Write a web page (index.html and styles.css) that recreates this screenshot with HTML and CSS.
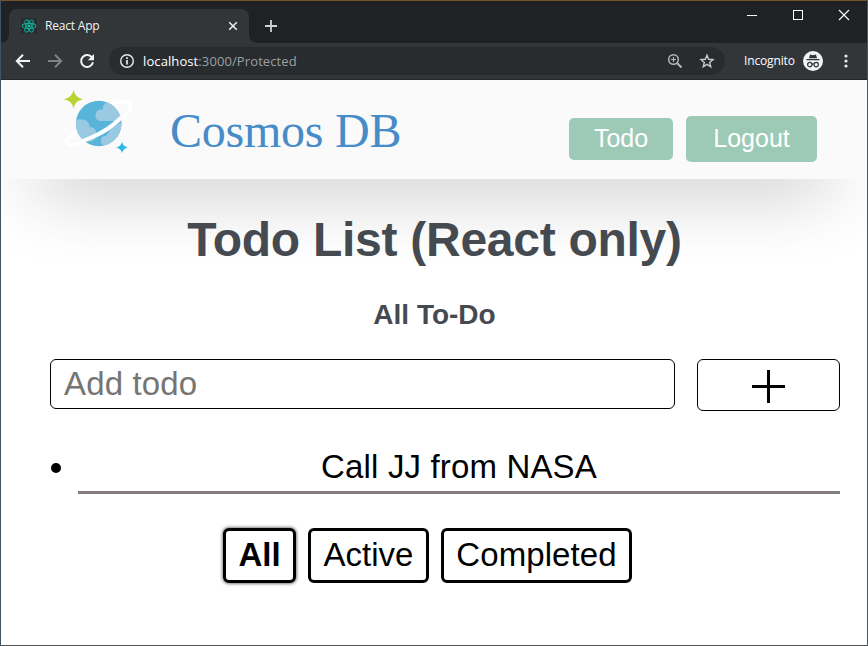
FILE: index.html
```html
<!DOCTYPE html>
<html lang="en">
<head>
<meta charset="utf-8">
<title>React App</title>
<link rel="stylesheet" href="styles.css">
</head>
<body>
<div class="window">
  <div class="tabstrip">
    <div class="tab">
      <svg class="favicon" width="16" height="16" viewBox="0 0 16 16"><rect width="16" height="16" fill="#282c34"/><g fill="none" stroke="#12a88c" stroke-width="1.1"><ellipse cx="8" cy="8" rx="6.8" ry="2.6"/><ellipse cx="8" cy="8" rx="6.8" ry="2.6" transform="rotate(60 8 8)"/><ellipse cx="8" cy="8" rx="6.8" ry="2.6" transform="rotate(120 8 8)"/></g><circle cx="8" cy="8" r="1.5" fill="#10c8a0"/></svg>
      <span class="tab-title">React App</span>
      <svg class="tab-close" width="10" height="10" viewBox="0 0 10 10"><path d="M1.2 1.2l7.6 7.6M8.8 1.2L1.2 8.8" stroke="#e8eaed" stroke-width="1.6"/></svg>
    </div>
    <svg class="new-tab" width="14" height="14" viewBox="0 0 14 14"><path d="M7 1v12M1 7h12" stroke="#d0d2d5" stroke-width="1.8"/></svg>
    <div class="controls">
      <svg width="12" height="12" viewBox="0 0 12 12"><path d="M1 6.5h10" stroke="#fff"/></svg>
      <svg width="12" height="12" viewBox="0 0 12 12"><rect x="1.5" y="1.5" width="9" height="9" fill="none" stroke="#fff"/></svg>
      <svg width="12" height="12" viewBox="0 0 12 12"><path d="M1 1l10 10M11 1L1 11" stroke="#fff" stroke-width="1.1"/></svg>
    </div>
  </div>
  <div class="toolbar">
    <svg width="16" height="16" viewBox="0 0 16 16"><path d="M15 8H2M8 1.8L1.8 8 8 14.2" fill="none" stroke="#f1f3f4" stroke-width="2"/></svg>
    <svg width="16" height="16" viewBox="0 0 16 16"><path d="M1 8h13M8 1.8L14.2 8 8 14.2" fill="none" stroke="#7f8285" stroke-width="2"/></svg>
    <svg width="16" height="16" viewBox="0 0 16 16"><path d="M13.2 4.8A6 6 0 1 0 14 9.3" fill="none" stroke="#f1f3f4" stroke-width="2"/><path d="M15 1v6.2H8.8z" fill="#f1f3f4"/></svg>
    <div class="omnibox">
      <svg width="16" height="16" viewBox="0 0 16 16"><circle cx="8" cy="8" r="6.3" fill="none" stroke="#e8eaed" stroke-width="1.4"/><path d="M8 7v4.6M8 4.2v1.7" stroke="#e8eaed" stroke-width="1.7"/></svg>
      <span class="url"><b>localhost</b>:3000/Protected</span>
      <svg class="magnify" width="16" height="16" viewBox="0 0 16 16"><circle cx="6.5" cy="6.5" r="4.8" fill="none" stroke="#b4b7ba" stroke-width="1.5"/><path d="M10 10l4.5 4.5" stroke="#b4b7ba" stroke-width="2"/><path d="M6.5 4v5M4 6.5h5" stroke="#b4b7ba" stroke-width="1.2"/></svg>
      <svg width="16" height="16" viewBox="0 0 16 16"><path d="M8 2.2l1.65 4.05 4.35.35-3.3 2.85 1 4.25L8 11.4l-3.7 2.3 1-4.25L2 6.6l4.35-.35z" fill="none" stroke="#c6c8ca" stroke-width="1.4"/></svg>
    </div>
    <span class="incognito">Incognito</span>
    <svg class="avatar" width="20" height="20" viewBox="0 0 20 20"><circle cx="10" cy="10" r="10" fill="#f1f3f4"/><path d="M7 3.5l3 .7 3-.7 1 3.8H6zM3.5 8h13v1.3h-13z" fill="#323639"/><g fill="none" stroke="#323639" stroke-width="1.2"><circle cx="6.8" cy="13.6" r="2.2"/><circle cx="13.2" cy="13.6" r="2.2"/><path d="M9 13.3q1-.7 2 0"/></g></svg>
    <svg class="more" width="4" height="14" viewBox="0 0 4 14" fill="#e8eaed"><circle cx="2" cy="2" r="1.6"/><circle cx="2" cy="7" r="1.6"/><circle cx="2" cy="12" r="1.6"/></svg>
  </div>
  <div class="page">
    <header class="header">
      <svg class="logo" width="100" height="80" viewBox="0 0 100 80">
        <defs><clipPath id="globe"><circle cx="48.7" cy="43.5" r="22.8"/></clipPath></defs>
        <path d="M61 23.500C72 20.500 79.500 21 80.500 25C81.500 30 76 36 68 42M28 50C20 56 15.500 61 17.500 63.500C20.500 66.500 31 64 40 60.500" fill="none" stroke="#fff" stroke-width="3.4"/>
        <circle cx="48.7" cy="43.5" r="22.8" fill="#59b4d9"/>
        <g clip-path="url(#globe)" fill="#9acae2">
          <path d="M72 41H50.500a5.800 5.800 0 0 1 0-11.500h2.500c-.5-5 3-9 10-8.500L74 32z"/>
          <path d="M24 39.500h9a7 7 0 0 1 6.500 7.500 5.800 5.800 0 0 1 0 14.500L24 66z"/>
          <path d="M51 60c0-3 2-4 5-4l4-6 14-10v25H54a4 4 0 0 1-3-5z"/>
        </g>
        <path d="M30 63.500C45 59.500 62 50.500 71.500 40L70.500 35.500C60 46 46 54.500 31 59.500z" fill="#fff"/>
        <path d="M23.500 9.800Q24.800 17.800 33 19.300Q24.800 20.800 23.500 28.500Q22.200 20.800 14 19.300Q22.200 17.800 23.500 9.800z" fill="#b8d432"/>
        <path d="M72 61.800Q73 66.500 77.800 67.500Q73 68.500 72 73.200Q71 68.500 66.200 67.500Q71 66.500 72 61.800z" fill="#2bb8e8"/>
      </svg>
      <span class="brand">Cosmos DB</span>
      <nav class="nav"><a class="nav-link">Todo</a><button class="nav-link logout">Logout</button></nav>
    </header>
    <main>
      <h1>Todo List (React only)</h1>
      <h2>All To-Do</h2>
      <form class="add">
        <input type="text" placeholder="Add todo">
        <button type="button" aria-label="Add"><svg width="35" height="35" viewBox="0 0 35 35"><path d="M17.500 1v33M1 17.500h33" stroke="#000" stroke-width="3"/></svg></button>
      </form>
      <ul class="list"><li><i class="dot"></i><span class="item">Call JJ from NASA</span></li></ul>
      <div class="filters"><button class="active">All</button><button>Active</button><button>Completed</button></div>
    </main>
  </div>
</div>
</body>
</html>
```
FILE: styles.css
```css
* { box-sizing: border-box; }
body { margin: 0; font-family: "Liberation Sans", Arial, sans-serif; }
svg { display: block; flex: none; }
button { font-family: inherit; margin: 0; }
.window { width: 868px; height: 646px; overflow: hidden; border: 1px solid #505457; border-top-color: #73522e; border-left-color: #3d5368; background: #fff; display: flex; flex-direction: column; }
.tabstrip { height: 42px; background: #202124; display: flex; padding: 8px 0 0 8px; flex: none; position: relative; }
.tab { width: 240px; height: 34px; border-radius: 8px 8px 0 0; background: #323639; display: flex; align-items: center; padding: 0 11px 0 12px; position: relative; }
.tab::before, .tab::after { content: ""; position: absolute; bottom: 0; width: 8px; height: 8px; }
.tab::before { left: -8px; background: radial-gradient(circle at 0 0, transparent 7.5px, #323639 8px); }
.tab::after { right: -8px; background: radial-gradient(circle at 100% 0, transparent 7.5px, #323639 8px); }
.tab-title { font: 12px/16px "Open Sans", sans-serif; color: #f1f3f4; margin-left: 8px; letter-spacing: -.2px; flex: 1; }
.new-tab { margin: 10px 0 0 15px; }
.controls { display: flex; gap: 34px; margin-left: auto; padding-right: 17px; }
.toolbar { height: 37px; background: #323639; border-bottom: 1px solid #25282b; display: flex; align-items: center; padding: 0 15px 0 14px; flex: none; position: relative; }
.toolbar > svg + svg { margin-left: 16px; }
.omnibox { width: 616px; height: 28px; border-radius: 14px; background: #282c2f; margin-left: 14px; display: flex; align-items: center; padding: 0 10px; gap: 8px; }
.url { font: 13px/18px "Open Sans", sans-serif; color: #9aa0a6; flex: 1; letter-spacing: .1px; }
.url b { font-weight: 400; color: #fff; }
.magnify { margin-right: 8px; }
.incognito { font: 12px/16px "Open Sans", sans-serif; color: #fff; width: 51px; margin-left: 19px; letter-spacing: -.15px; }
.avatar { margin-left: 8px; }
.toolbar > .more { margin-left: auto; margin-right: 4px; }
.page { flex: 1; }
.header { height: 99px; background: #fafafa; display: flex; box-shadow: 0 38px 74px -36px rgba(0,0,0,.42); }
.logo { margin-left: 49px; }
.brand { font: 48px/56px "Liberation Serif", "Times New Roman", serif; color: #468cc8; margin: 23px 0 0 20px; white-space: nowrap; letter-spacing: -.25px; }
.nav { display: flex; align-items: center; gap: 13px; height: 46px; margin: 36px 50px 0 auto; }
.nav-link { width: 104px; height: 42px; border-radius: 5px; background: #9dcab7; color: #fff; font-size: 25px; line-height: 40px; text-align: center; border: 0; padding: 0; }
.logout { width: 131px; height: 46px; line-height: 44px; padding-bottom: 2px; }
main { padding: 0 27px 0 49px; position: relative; }
h1 { margin: 33px -28px 0 -49px; font-size: 48px; line-height: 56px; color: #454a50; text-align: center; white-space: nowrap; letter-spacing: -.27px; }
h2 { margin: 31px -28px 0 -49px; font-size: 28px; line-height: 32px; color: #454a50; text-align: center; }
.add { display: flex; gap: 22px; align-items: flex-start; margin-top: 28px; }
.add input { width: 625px; height: 50px; border: 1px solid #000; border-radius: 6px; padding: 0 13px; font: 33px "Liberation Sans", sans-serif; letter-spacing: .15px; }
.add input::placeholder { color: #757575; opacity: 1; }
.add button { width: 143px; height: 52px; border: 1px solid #000; border-radius: 6px; background: #fff; display: flex; justify-content: center; align-items: center; padding: 2px 0 0; }
.list { list-style: none; margin: 36px 0 0; padding: 0; }
.list li { display: flex; align-items: center; }
.dot { width: 10px; height: 10px; border-radius: 50%; background: #000; margin: 0 17px 6px 1px; }
.item { flex: 1; height: 47px; border-bottom: 3px solid #837d7f; text-align: center; font-size: 33px; line-height: 40px; letter-spacing: .15px; }
.filters { display: flex; gap: 12px; margin: 34px 0 0 173px; }
.filters button { height: 55px; border: 3px solid #000; border-radius: 6px; background: #fff; color: #000; font-size: 33px; line-height: 45px; padding: 0 0 2px; width: 121px; }
.filters button:last-child { width: 191px; letter-spacing: .1px; }
.filters .active { width: 73px; font-weight: bold; box-shadow: 0 0 3px 1px rgba(0,0,0,.5); }
```
